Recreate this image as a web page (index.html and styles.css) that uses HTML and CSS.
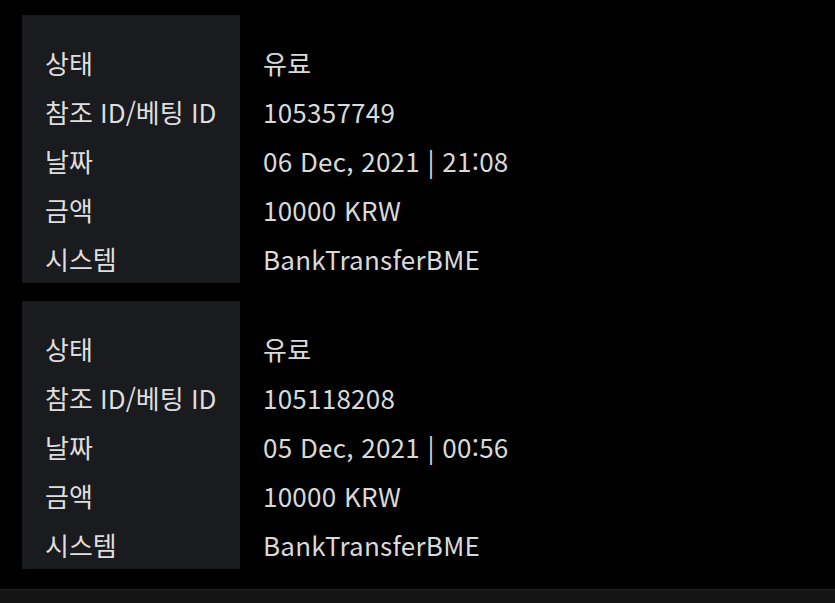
FILE: index.html
```html
<!DOCTYPE html>
<html lang="ko">
<head>
<meta charset="UTF-8" />
<meta name="viewport" content="width=device-width, initial-scale=1" />
<title>입금 내역</title>
<link rel="stylesheet" href="styles.css">
</head>
<body>

<div class="history-list">
  <table class="history-card">
    <tr><th>상태</th><td>유료</td></tr>
    <tr><th>참조 ID/베팅 ID</th><td>105357749</td></tr>
    <tr><th>날짜</th><td>06 Dec, 2021 | 21:08</td></tr>
    <tr><th>금액</th><td>10000 KRW</td></tr>
    <tr><th>시스템</th><td>BankTransferBME</td></tr>
  </table>

  <table class="history-card">
    <tr><th>상태</th><td>유료</td></tr>
    <tr><th>참조 ID/베팅 ID</th><td>105118208</td></tr>
    <tr><th>날짜</th><td>05 Dec, 2021 | 00:56</td></tr>
    <tr><th>금액</th><td>10000 KRW</td></tr>
    <tr><th>시스템</th><td>BankTransferBME</td></tr>
  </table>
</div>

<div class="bottom-bar"></div>

</body>
</html>
```

FILE: styles.css
```css
/* Reset & base */
* {
  box-sizing: border-box;
}
body {
  margin: 0;
  background: #000;
  color: #d9d9d9;
  font-family: 'Noto Sans CJK KR', 'Noto Sans', sans-serif;
  font-size: 26px;
  min-height: 603px;
  display: flex;
  flex-direction: column;
}

.history-list {
  padding: 15px 0 0 22px;
  display: flex;
  flex-direction: column;
  gap: 18px;
  flex: 1;
}

/* one deposit record */
.history-card {
  border-collapse: collapse;
}
.history-card th,
.history-card td {
  height: 49px;
  text-align: left;
  font-weight: 400;
  white-space: nowrap;
  vertical-align: middle;
}
.history-card th {
  width: 218px;
  padding: 0 0 0 23px;
  background: #1a1b1e;
  color: #dedede;
}
.history-card td {
  padding: 0 23px 0 23px;
  letter-spacing: 0.25px;
}
.history-card tr:first-child th,
.history-card tr:first-child td {
  height: 72px;
  padding-top: 23px;
}

.bottom-bar {
  height: 14px;
  background: #141414;
  border-top: 1px solid #222;
}
```
